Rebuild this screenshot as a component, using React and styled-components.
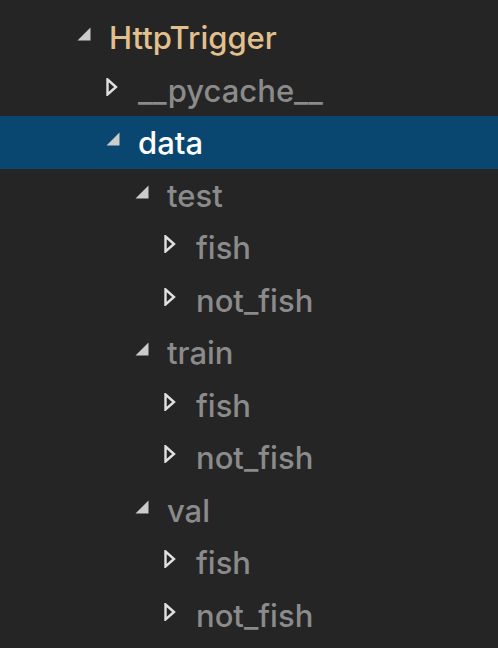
import React from 'react';
import styled, { createGlobalStyle } from 'styled-components';

const Global = createGlobalStyle`
  html, body {
    margin: 0;
    padding: 0;
    background: #252526;
  }
`

const Tree = styled.div`
  display: flex;
  flex-direction: column;
  padding-top: 11px;
  width: 498px;
  height: 648px;
  box-sizing: border-box;
  background: #252526;
  font-family: Inter, "Open Sans", sans-serif;
  overflow: hidden;
`

const Row = styled.div`
  display: flex;
  align-items: center;
  height: 52.5px;
  flex-shrink: 0;
  padding-left: ${p => 77 + p.$level * 29}px;
  background: ${p => (p.$selected ? '#094771' : 'transparent')};
`

const Twistie = styled.span`
  display: flex;
  align-items: center;
  width: 32px;
  height: 100%;
  flex-shrink: 0;
  margin-top: -6px;
`

const Label = styled.span`
  font-size: 31px;
  font-weight: 500;
  color: ${p => p.$color};
  white-space: nowrap;
  margin-top: 1px;
`

function Expanded() {
  return (
    <svg width="14" height="14" viewBox="0 0 14 14">
      <polygon points="13.5,0.5 13.5,13.5 0.5,13.5" fill="#cccccc" />
    </svg>
  )
}

function Collapsed() {
  return (
    <svg width="12" height="18" viewBox="0 0 12 18">
      <polygon points="1.5,1.5 10,9 1.5,16.5" fill="none" stroke="#e0e0e0" strokeWidth="2.4" strokeLinejoin="miter" />
    </svg>
  )
}

const items = [
  { name: 'HttpTrigger', level: 0, open: true, color: '#e2c08d' },
  { name: '__pycache__', level: 1, open: false },
  { name: 'data', level: 1, open: true, selected: true, color: '#ffffff' },
  { name: 'test', level: 2, open: true },
  { name: 'fish', level: 3, open: false },
  { name: 'not_fish', level: 3, open: false },
  { name: 'train', level: 2, open: true },
  { name: 'fish', level: 3, open: false },
  { name: 'not_fish', level: 3, open: false },
  { name: 'val', level: 2, open: true },
  { name: 'fish', level: 3, open: false },
  { name: 'not_fish', level: 3, open: false },
]

export default function App() {
  return (
    <>
      <Global />
      <Tree>
        {items.map((it, i) => (
          <Row key={i} $level={it.level} $selected={it.selected}>
            <Twistie>{it.open ? <Expanded /> : <Collapsed />}</Twistie>
            <Label $color={it.color || '#8b8b8b'}>{it.name}</Label>
          </Row>
        ))}
      </Tree>
    </>
  )
}
